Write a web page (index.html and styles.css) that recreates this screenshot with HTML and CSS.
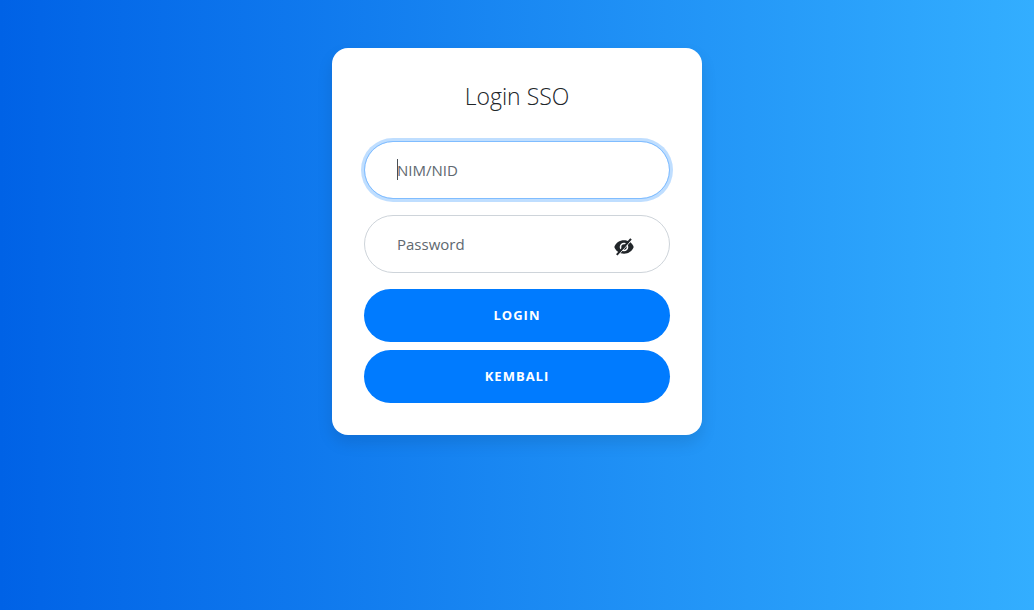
FILE: index.html
```
<!DOCTYPE html>
<html lang="id">
<head>
<meta charset="utf-8">
<meta name="viewport" content="width=device-width, initial-scale=1">
<title>Login SSO</title>
<link rel="stylesheet" href="styles.css">
</head>
<body>
<main class="card">
  <h1 class="card-title">Login SSO</h1>
  <form class="form">
    <input class="field is-active" type="text" name="username" placeholder="NIM/NID" aria-label="NIM/NID" autofocus>
    <div class="password">
      <input class="field" type="password" name="password" placeholder="Password" aria-label="Password">
      <button class="toggle" type="button" aria-label="Tampilkan password">
        <svg viewBox="0 0 20 18" width="20" height="18" aria-hidden="true">
          <path fill="#212529" d="M.3 9C1.800 5 5.500 2.300 10 2.300S18.200 5 19.700 9C18.200 13 14.500 15.700 10 15.700S1.800 13 .3 9Z"/>
          <circle cx="10" cy="9" r="3.500" fill="none" stroke="#fff" stroke-width="1.600"/>
          <path d="M4 17.500 17.800 2" stroke="#fff" stroke-width="1"/>
          <path d="M2.800 16.800 17 .9" stroke="#212529" stroke-width="2"/>
        </svg>
      </button>
    </div>
    <div class="actions">
      <button class="btn" type="submit">Login</button>
      <a class="btn" href="#">Kembali</a>
    </div>
  </form>
</main>
</body>
</html>
```
FILE: styles.css
```
* {
  box-sizing: border-box;
}

body {
  margin: 0;
  min-height: 100vh;
  padding: 48px 16px;
  background: linear-gradient(to right, #0062e6, #33aeff);
  color: #212529;
  font-family: "Segoe UI", "Open Sans", sans-serif;
  font-size: 15px;
}

.card {
  max-width: 370px;
  margin: 0 auto;
  padding: 32px;
  border-radius: 16px;
  background: #fff;
  box-shadow: 0 8px 16px rgba(0, 0, 0, 0.1);
}

.card-title {
  margin: 0 0 29px;
  font-size: 23px;
  font-weight: 300;
  line-height: 32px;
  text-align: center;
}

.form {
  display: grid;
  gap: 16px;
}

.field {
  display: block;
  width: 100%;
  height: 58px;
  padding: 17px 32px;
  border: 1px solid #ced4da;
  border-radius: 32px;
  outline: 0;
  background: #fff;
  color: #495057;
  font: inherit;
}

.field::placeholder {
  color: #60686f;
  opacity: 1;
}

.is-active {
  border-color: #80bdff;
  background: linear-gradient(#495057, #495057) left top / 1px 21px no-repeat content-box #fff;
  box-shadow: 0 0 0 3px rgba(0, 123, 255, 0.25);
  caret-color: transparent;
}

.password {
  position: relative;
}

.toggle {
  position: absolute;
  top: 23px;
  right: 36px;
  padding: 0;
  border: 0;
  background: none;
  cursor: pointer;
}

.toggle svg {
  display: block;
}

.actions {
  display: grid;
  gap: 8px;
}

.btn {
  padding: 16px;
  border: 0;
  border-radius: 32px;
  background: #007bff;
  color: #fff;
  font-family: inherit;
  font-size: 13px;
  font-weight: 700;
  line-height: 21px;
  letter-spacing: 1px;
  text-align: center;
  text-decoration: none;
  text-transform: uppercase;
  cursor: pointer;
}
```
